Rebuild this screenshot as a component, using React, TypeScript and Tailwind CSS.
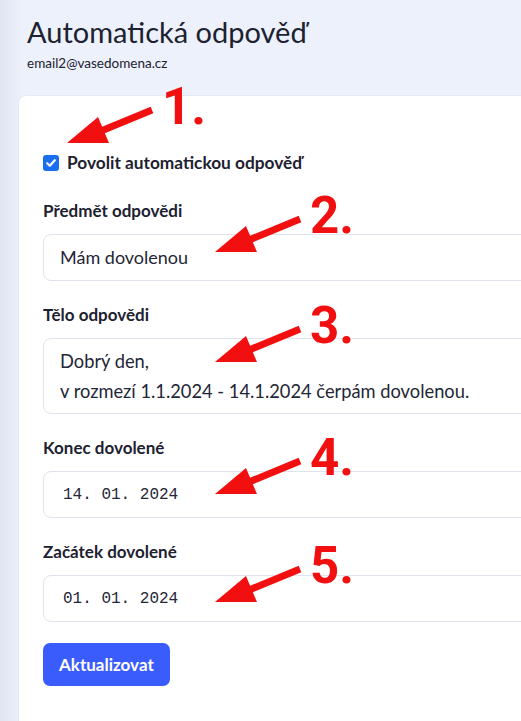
import React from "react";

const FONT = { fontFamily: "Lato, 'Noto Sans', sans-serif" };
const MONO = { fontFamily: "'Liberation Mono', monospace" };

function Annotation({ x, y, n }: { x: number; y: number; n: string }) {
  return (
    <div className="absolute pointer-events-none" style={{ left: x, top: y }}>
      <svg
        className="absolute"
        width={96}
        height={46}
        viewBox="-4 -42 96 46"
        style={{ left: -4, top: -42 }}
      >
        <line x1={34} y1={-12} x2={85} y2={-33} stroke="#f20f0f" strokeWidth={7} />
        <polygon points="0,0 31,-26 42,0" fill="#f20f0f" />
      </svg>
      <span
        className="absolute text-[51px] font-bold leading-none text-[#f20f0f]"
        style={{ left: 95, top: -62, fontFamily: "Roboto, 'Noto Sans', sans-serif" }}
      >
        {n}
      </span>
    </div>
  );
}

function Field({ label, children }: { label: string; children: React.ReactNode }) {
  return (
    <div className="flex flex-col gap-[11px]">
      <div className="h-6 flex items-center text-[17px] font-bold text-[#1d2130]">{label}</div>
      {children}
    </div>
  );
}

const box = "rounded-lg border border-[#dfe3ee] text-[#1f2636]";

export default function App() {
  return (
    <div
      className="relative w-[521px] h-[721px] overflow-hidden flex flex-col bg-[linear-gradient(to_right,#e1e4f1,#edf1fc_22px)]"
      style={FONT}
    >
      <header className="pl-[27px] pt-[14px] flex flex-col gap-[4px]">
        <h1 className="text-[29px] leading-[36px] text-[#1c2230] font-normal">Automatická odpověď</h1>
        <p className="text-[13.5px] leading-[18px] text-[#1c2230]">email2@vasedomena.cz</p>
      </header>

      <main className="ml-[18px] mt-[23px] w-[620px] flex-1 bg-white rounded-tl-lg border-l border-t border-[#e6e9f3] pl-[24px] pt-[55px] flex flex-col items-start gap-[24px]">
        <label className="h-6 flex items-center gap-2 text-[17.3px] font-bold text-[#1d2130]">
          <span className="w-4 h-4 rounded-[3px] bg-[#1a6ff0] flex items-center justify-center">
            <svg width="12" height="12" viewBox="0 0 12 12">
              <path
                d="M2.2 6.2 L4.8 8.8 L9.8 3.2"
                stroke="white"
                strokeWidth="2.2"
                fill="none"
                strokeLinecap="round"
                strokeLinejoin="round"
              />
            </svg>
          </span>
          Povolit automatickou odpověď
        </label>

        <div className="self-stretch flex flex-col gap-[22px]">
          <Field label="Předmět odpovědi">
            <div className={`${box} h-[47px] px-4 flex items-center text-[18px]`}>Mám dovolenou</div>
          </Field>

          <Field label="Tělo odpovědi">
            <div className={`${box} h-[76px] px-4 pt-[7px] text-[18.3px] leading-[30px]`}>
              <div>Dobrý den,</div>
              <div>v rozmezí 1.1.2024 - 14.1.2024 čerpám dovolenou.</div>
            </div>
          </Field>

          <Field label="Konec dovolené">
            <div className={`${box} h-[47px] pl-[19px] flex items-center text-[16px]`} style={MONO}>
              14. 01. 2024
            </div>
          </Field>

          <Field label="Začátek dovolené">
            <div className={`${box} h-[47px] pl-[19px] flex items-center text-[16px]`} style={MONO}>
              01. 01. 2024
            </div>
          </Field>
        </div>

        <button className="-mt-[3px] h-[43px] px-4 rounded-[7px] bg-[#3a5cfc] text-white text-[17px] font-bold">
          Aktualizovat
        </button>
      </main>

      <Annotation x={67} y={143} n="1." />
      <Annotation x={215} y={252} n="2." />
      <Annotation x={215} y={362} n="3." />
      <Annotation x={215} y={494} n="4." />
      <Annotation x={215} y={602} n="5." />
    </div>
  );
}
